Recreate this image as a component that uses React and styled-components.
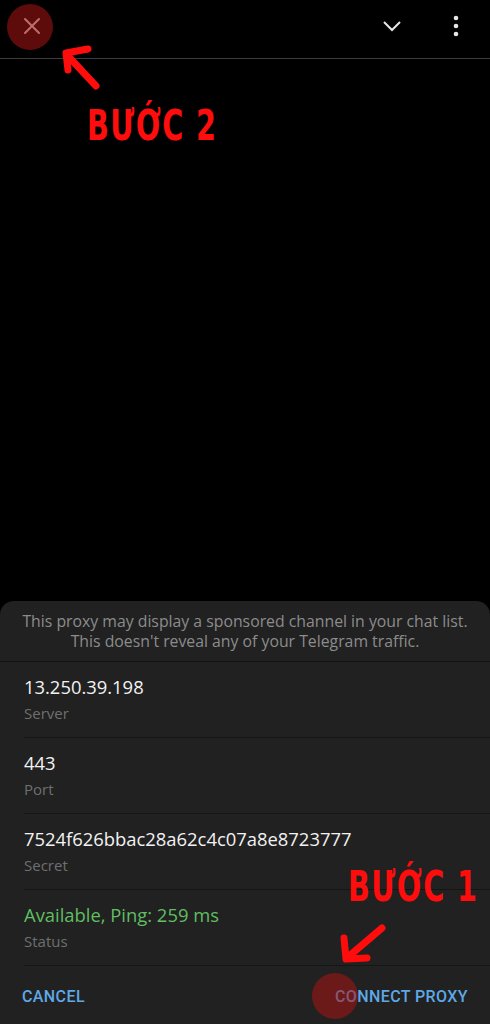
import React from "react"
import styled, { createGlobalStyle } from "styled-components"

const accent = "#5ea8e6"
const annotationRed = "#ff0d0d"

const GlobalStyle = createGlobalStyle`
    html, body {
        margin: 0;
        padding: 0;
        background: #000;
    }
    body {
        font-family: "Open Sans", Roboto, sans-serif;
        -webkit-font-smoothing: antialiased;
    }
`

const Screen = styled.div`
    position: relative;
    width: 490px;
    height: 1024px;
    display: flex;
    flex-direction: column;
    background: #000;
    overflow: hidden;
`

const TopBar = styled.header`
    height: 58px;
    display: flex;
    align-items: center;
    justify-content: space-between;
    padding: 0 12px 0 10px;
    border-bottom: 1px solid #3c3c3c;
    box-sizing: content-box;
`
const IconButton = styled.button`
    width: 44px;
    height: 44px;
    display: flex;
    align-items: center;
    justify-content: center;
    border: none;
    background: none;
    padding: 0;
    margin-top: -6px;
    color: #d8d8d8;
`
const Actions = styled.div`
    display: flex;
    gap: 20px;
    align-items: center;
`

const Viewer = styled.div`
    flex: 1;
`

const Sheet = styled.section`
    background: #212121;
    border-radius: 14px 14px 0 0;
`
const Notice = styled.p`
    margin: 0;
    padding: 10px 8px;
    text-align: center;
    font-size: 15.8px;
    line-height: 20px;
    color: #8c8c8c;
    border-bottom: 1px solid #141414;
`
const Row = styled.div`
    height: 76px;
    margin-left: 24px;
    padding-top: 13px;
    box-sizing: border-box;
    border-bottom: 1px solid #151515;
`
const Value = styled.div`
    font-size: 18.4px;
    line-height: 24px;
    color: ${p => p.$ok ? "#5fbf62" : "#f2f2f2"};
`
const Label = styled.div`
    margin-top: 4px;
    font-size: 15px;
    line-height: 20px;
    color: #6f6f6f;
`

const Buttons = styled.div`
    display: flex;
    justify-content: space-between;
    align-items: center;
    height: 58px;
    padding: 0 22px 0 22px;
`
const TextButton = styled.button`
    border: none;
    background: none;
    padding: 0;
    font-family: Roboto, sans-serif;
    font-weight: 500;
    font-size: 16px;
    letter-spacing: 0.4px;
    color: ${accent};
    margin-top: 2px;
`

const Highlight = styled.div`
    position: absolute;
    width: 46px;
    height: 46px;
    border-radius: 50%;
    background: rgba(170, 20, 20, 0.55);
    left: ${p => p.$x - 23}px;
    top: ${p => p.$y - 23}px;
    pointer-events: none;
`
const StepLabel = styled.div`
    position: absolute;
    left: ${p => p.$x}px;
    top: ${p => p.$y}px;
    font-family: "DejaVu Sans Condensed", "DejaVu Sans", sans-serif;
    font-weight: bold;
    font-size: 43px;
    line-height: 1;
    color: ${annotationRed};
    transform: scaleX(0.74);
    transform-origin: left top;
    letter-spacing: 2px;
    white-space: nowrap;
`
const ArrowLayer = styled.svg`
    position: absolute;
    left: 0;
    top: 0;
    pointer-events: none;
`

const rows = [
    { value: "13.250.39.198", label: "Server" },
    { value: "443", label: "Port" },
    { value: "7524f626bbac28a62c4c07a8e8723777", label: "Secret" },
    { value: "Available, Ping: 259 ms", label: "Status", ok: true },
]

const App = () => (
    <Screen>
        <GlobalStyle />
        <TopBar>
            <IconButton aria-label="close">
                <svg width="18" height="18" viewBox="0 0 18 18">
                    <path d="M2 2L16 16M16 2L2 16" stroke="currentColor" strokeWidth="2" strokeLinecap="round" />
                </svg>
            </IconButton>
            <Actions>
                <IconButton aria-label="collapse">
                    <svg width="20" height="12" viewBox="0 0 20 12">
                        <path d="M2 2L10 10L18 2" stroke="#e6e6e6" strokeWidth="2" fill="none" />
                    </svg>
                </IconButton>
                <IconButton aria-label="menu">
                    <svg width="6" height="22" viewBox="0 0 6 22">
                        <circle cx="3" cy="3" r="2.3" fill="#e6e6e6" />
                        <circle cx="3" cy="11" r="2.3" fill="#e6e6e6" />
                        <circle cx="3" cy="19" r="2.3" fill="#e6e6e6" />
                    </svg>
                </IconButton>
            </Actions>
        </TopBar>

        <Viewer />

        <Sheet>
            <Notice>
                This proxy may display a sponsored channel in your chat list.<br />
                This doesn't reveal any of your Telegram traffic.
            </Notice>
            {rows.map(r => (
                <Row key={r.label}>
                    <Value $ok={r.ok}>{r.value}</Value>
                    <Label>{r.label}</Label>
                </Row>
            ))}
            <Buttons>
                <TextButton>CANCEL</TextButton>
                <TextButton>CONNECT PROXY</TextButton>
            </Buttons>
        </Sheet>

        {/* tutorial annotations drawn over the screenshot */}
        <Highlight $x={30} $y={27} />
        <Highlight $x={335} $y={996} />
        <StepLabel $x={87} $y={104}>BƯỚC 2</StepLabel>
        <StepLabel $x={348} $y={865}>BƯỚC 1</StepLabel>
        <ArrowLayer width="490" height="1024" viewBox="0 0 490 1024">
            <g stroke={annotationRed} strokeWidth="7" strokeLinecap="round" strokeLinejoin="round" fill="none">
                <path d="M96 86L68 56M66 53L88 49M66 53L68 70" />
                <path d="M382 928L348 957M346 959L344 938M346 959L367 958" />
            </g>
        </ArrowLayer>
    </Screen>
)

export default App
